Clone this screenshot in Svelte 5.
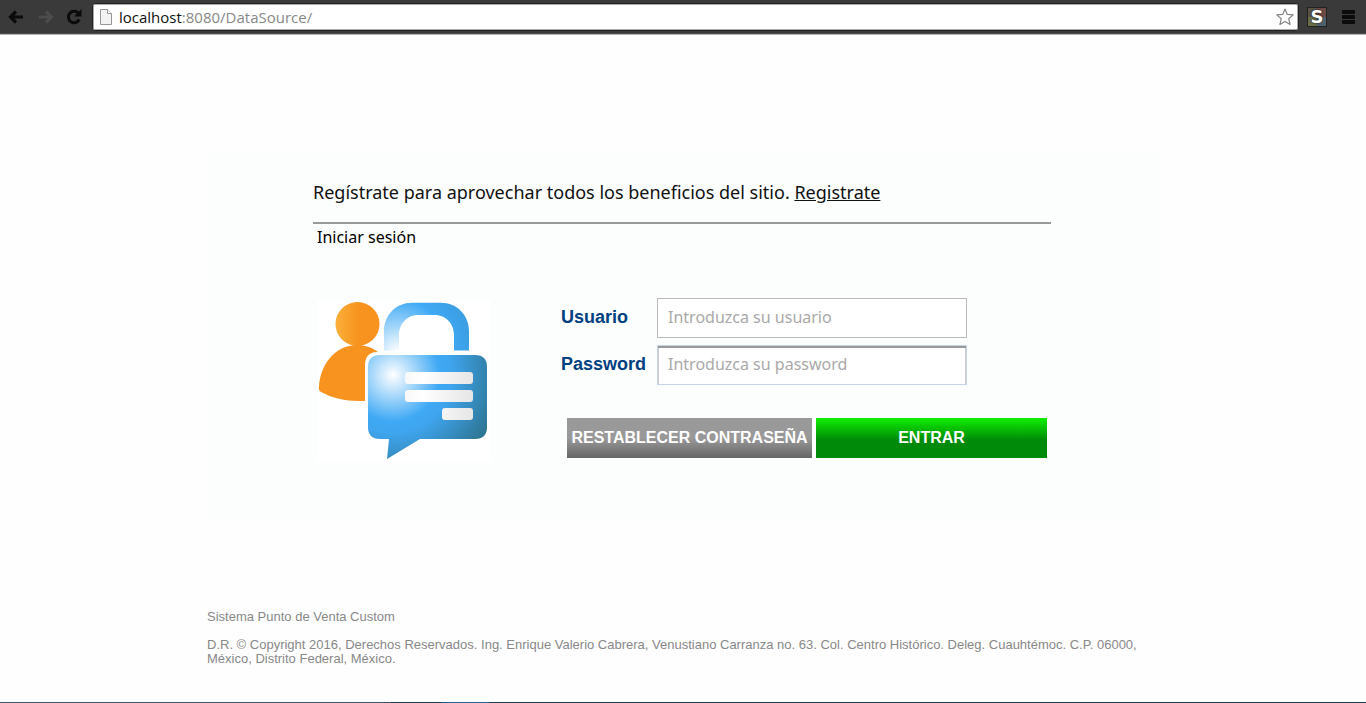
<script>
  let user = $state('');
  let password = $state('');
</script>

<div class="page">
  <header class="toolbar">
    <button class="tool back" aria-label="Atrás">
      <svg width="16" height="14" viewBox="0 0 16 14"><path d="M15 7H3M8 1.5 2.5 7 8 12.5" fill="none" stroke="#0b0b0b" stroke-width="3.2" /></svg>
    </button>
    <button class="tool forward" aria-label="Adelante">
      <svg width="16" height="14" viewBox="0 0 16 14"><path d="M1 7h12M8 1.5 13.5 7 8 12.5" fill="none" stroke="#4d4d4d" stroke-width="3" /></svg>
    </button>
    <button class="tool reload" aria-label="Recargar">
      <svg width="16" height="16" viewBox="0 0 16 16"><path d="M12.4 4.2A5.7 5.7 0 1 0 13.2 10.5" fill="none" stroke="#0b0b0b" stroke-width="3" /><path d="M15.5 0v7.5H8z" fill="#0b0b0b" /></svg>
    </button>
    <div class="address">
      <svg width="12" height="16" viewBox="0 0 12 16"><path d="M.5.5h7l4 4v11H.5z" fill="#f3f3f3" stroke="#969696" /><path d="M7.5.5v4h4" fill="#fff" stroke="#969696" /></svg>
      <span class="url">localhost<span>:8080/DataSource/</span></span>
      <button class="tool" aria-label="Marcador">
        <svg width="18" height="18" viewBox="0 0 18 18"><path d="m9 1 2.3 5.4 5.9.5-4.5 3.8 1.4 5.8L9 13.4l-5.1 3.1 1.4-5.8L.8 6.9l5.9-.5z" fill="#fff" stroke="#858585" stroke-width="1.2" stroke-linejoin="round" /></svg>
      </button>
    </div>
    <button class="tool ext" aria-label="Extensión">S</button>
    <button class="tool menu" aria-label="Menú"><i></i><i></i><i></i></button>
  </header>

  <main class="card">
    <p class="intro">Regístrate para aprovechar todos los beneficios del sitio. <a href="#registro">Registrate</a></p>
    <h1>Iniciar sesión</h1>
    <div class="content">
      <svg class="picture" width="174" height="162" viewBox="0 0 174 162" aria-hidden="true">
        <defs>
          <radialGradient id="bubble" gradientUnits="userSpaceOnUse" cx="77" cy="75" r="108">
            <stop offset="0" stop-color="#fff" />
            <stop offset=".43" stop-color="#3fa9f5" />
            <stop offset=".54" stop-color="#3fa5ee" />
            <stop offset="1" stop-color="#2e7593" />
          </radialGradient>
          <radialGradient id="shackle" gradientUnits="userSpaceOnUse" cx="80" cy="52" r="110">
            <stop offset="0" stop-color="#fff" />
            <stop offset=".48" stop-color="#3fa9f5" />
            <stop offset="1" stop-color="#388cc4" />
          </radialGradient>
          <linearGradient id="head">
            <stop offset="0" stop-color="#fbb03b" />
            <stop offset=".52" stop-color="#f7931e" />
          </linearGradient>
          <linearGradient id="line" gradientUnits="userSpaceOnUse" x1="89" y1="0" x2="157" y2="0">
            <stop offset="0" stop-color="#f8f8f8" />
            <stop offset=".25" stop-color="#fff" />
            <stop offset="1" stop-color="#e6e6e6" />
          </linearGradient>
        </defs>
        <rect width="174" height="162" fill="#fff" />
        <g transform="translate(-1 0)">
          <circle cx="41.5" cy="24" r="22" fill="url(#head)" />
          <path d="M3 87C4 65 19 45 41 45c8 0 14 2 21 7v49H43c-14 0-27-3-38-9q-3-2-2-5z" fill="#f7931e" />
          <path d="M49 110V65q0-13 13-13h20v-2h90v70H49z" fill="#fff" />
        </g>
        <path d="M67 50.500V31C67 15 79 2.700 95 2.700h29c16 0 28 12.300 28 28.300v19.500h-15V35c0-11-8-20-19-20h-17c-11 0-19 9-19 20v15.500z" fill="url(#shackle)" />
        <g transform="translate(-1 0)">
          <path d="M64 55h95q12 0 12 12v60q0 12-12 12h-55l-33 20 2-20h-9q-12 0-12-12V67q0-12 12-12z" fill="url(#bubble)" />
          <rect x="89" y="72" width="68" height="12" rx="3" fill="url(#line)" />
          <rect x="89" y="90" width="68" height="12" rx="3" fill="url(#line)" />
          <rect x="126" y="108" width="31" height="12" rx="3" fill="url(#line)" />
        </g>
      </svg>
      <form onsubmit={(e) => e.preventDefault()}>
        <div class="fields">
          <label for="user">Usuario</label>
          <input id="user" type="text" placeholder="Introduzca su usuario" bind:value={user} />
          <label for="password">Password</label>
          <input id="password" class="sunken" type="password" placeholder="Introduzca su password" bind:value={password} />
        </div>
        <div class="actions">
          <button class="reset" type="button">RESTABLECER CONTRASEÑA</button>
          <button class="enter" type="submit">ENTRAR</button>
        </div>
      </form>
    </div>
  </main>

  <footer>
    <p>Sistema Punto de Venta Custom</p>
    <p>D.R. © Copyright 2016, Derechos Reservados. Ing. Enrique Valerio Cabrera, Venustiano Carranza no. 63. Col. Centro Histórico. Deleg. Cuauhtémoc. C.P. 06000, México, Distrito Federal, México.</p>
  </footer>
  <div class="strip"></div>
</div>

<style>
  :global(body) { background: #fefefe; }
  .page {
    min-height: 100vh;
    display: flex;
    flex-direction: column;
    font-family: "Noto Sans", sans-serif;
    color: #111;
  }
  .toolbar {
    display: flex;
    align-items: center;
    height: 34px;
    box-sizing: border-box;
    padding: 0 8px;
    background: #3a3a3a;
    border-bottom: 1px solid #4c4c4c;
    box-shadow: 0 1px #b4b4b4;
  }
  .tool {
    display: flex;
    padding: 0;
    border: 0;
    background: none;
  }
  .forward { margin-left: 14px; }
  .reload { margin: 0 10px 0 12px; }
  .address {
    flex: 1;
    display: flex;
    align-items: center;
    gap: 7px;
    height: 28px;
    box-sizing: border-box;
    padding: 0 4px 0 7px;
    background: #fff;
    border: 1px solid #222;
    border-radius: 3px;
    box-shadow: inset 0 0 0 1px #aaa;
  }
  .url {
    flex: 1;
    font: 15px/24px "Open Sans", sans-serif;
    color: #111;
  }
  .url span { color: #888; }
  .ext {
    width: 20px;
    height: 20px;
    margin: 0 15px 0 8px;
    align-items: center;
    justify-content: center;
    border: 1px solid #222;
    background: conic-gradient(#6d4a47 25%, #4d6470 0 50%, #6b6d49 0 75%, #595346 0);
    color: #fff;
    font: bold 18px/18px "DejaVu Sans", sans-serif;
    text-shadow: 0 0 2px #000;
  }
  .menu {
    width: 13px;
    flex-direction: column;
    gap: 1px;
    margin-right: 3px;
  }
  .menu i {
    height: 4px;
    border-radius: 1px;
    background: #0b0b0b;
  }
  .card, footer {
    width: 100%;
    max-width: 952px;
    box-sizing: border-box;
    margin: 0 auto;
  }
  .card {
    margin-top: 119px;
    padding: 26px 108px 58px 106px;
    border-radius: 4px;
    background: #fcfefd;
  }
  p, h1 { margin: 0; }
  .intro {
    padding-bottom: 17px;
    border-bottom: 2px solid #999;
    font-size: 18px;
    line-height: 26px;
  }
  .intro a { color: inherit; }
  h1 {
    padding-left: 4px;
    font-size: 16px;
    font-weight: 400;
    line-height: 26px;
    color: #000;
  }
  .content {
    display: flex;
    gap: 70px;
    margin-top: 48px;
    padding-left: 4px;
  }
  .picture { flex: none; margin-top: 2px; }
  form { flex: 1; }
  .fields {
    display: grid;
    grid-template-columns: 88px 310px;
    gap: 7px 8px;
    align-items: center;
  }
  label {
    padding-bottom: 2px;
    font: bold 18px/22px "Liberation Sans", sans-serif;
    color: #004080;
  }
  input {
    height: 40px;
    box-sizing: border-box;
    padding: 0 10px 2px;
    border: 1px solid #bbb;
    background: #fff;
    font: 16px/22px "Noto Sans", sans-serif;
    color: #111;
  }
  .sunken {
    border-color: #c5d6e8;
    box-shadow: inset 0 2px #999, inset 1px 0 #ccc, inset -1px 0 #ccc;
  }
  input::placeholder { color: #a9a9a9; opacity: 1; }
  .actions {
    display: grid;
    grid-template-columns: 245px 231px;
    gap: 4px;
    margin: 33px 0 0 6px;
  }
  .actions button {
    height: 40px;
    padding: 0;
    border: 0;
    color: #fff;
    font: bold 16px/20px "Liberation Sans", sans-serif;
    white-space: nowrap;
  }
  .reset { background: linear-gradient(#999 50%, #666); }
  .enter { background: linear-gradient(#0ff000, #008a09 55%); }
  footer {
    display: grid;
    gap: 14px;
    margin-top: 90px;
    padding-bottom: 24px;
    font: 13px/14px "Liberation Sans", sans-serif;
    color: #888;
  }
  .strip {
    height: 1px;
    margin-top: auto;
    background: linear-gradient(90deg, #345b78 391px, #0c3f60 0 442px, #1c6592 0 490px, #0c3f60 0);
  }
</style>
